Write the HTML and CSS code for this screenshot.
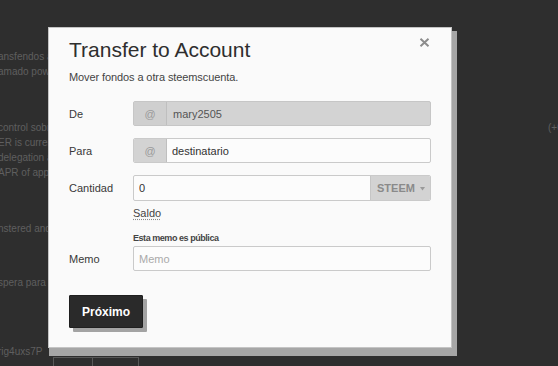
FILE: index.html
```html
<!DOCTYPE html>
<html lang="es">
<head>
<meta charset="utf-8">
<title>Transfer to Account</title>
<link rel="stylesheet" href="styles.css">
</head>
<body>
<div class="page">
  <div class="feed">
    <p class="bg-p p1"><span>ansfendos a otra cuenta</span><span>amado power down</span></p>
    <p class="bg-p p2"><span>control sobre sus fondos</span><span>ER is currently</span><span>delegation a otros</span><span>APR of approximately</span></p>
    <p class="bg-p p3"><span>nstered and</span></p>
    <p class="bg-p p4"><span>spera para</span></p>
    <div class="bg-row"><span class="bg-code">rig4uxs7P</span><i class="bg-box b1"></i><i class="bg-box b2"></i></div>
  </div>
  <div class="side">(+0.000 STEEM)</div>
</div>

<div class="modal">
  <button class="close" aria-label="Cerrar">
    <svg width="11" height="9" viewBox="0 0 11 9"><path d="M1.5 0.8L9.5 8.2M9.5 0.8L1.5 8.2" stroke="#8c8c8c" stroke-width="2" fill="none"/></svg>
  </button>
  <h2 class="title">Transfer to Account</h2>
  <p class="subtitle">Mover fondos a otra steemscuenta.</p>

  <div class="form">
    <div class="row r-de">
      <div class="label">De</div>
      <div class="field">
        <div class="group disabled"><span class="addon at">@</span><input class="ctl" value="mary2505" readonly></div>
      </div>
    </div>

    <div class="row r-para">
      <div class="label">Para</div>
      <div class="field">
        <div class="group"><span class="addon at">@</span><input class="ctl" value="destinatario" readonly></div>
      </div>
    </div>

    <div class="row r-cant">
      <div class="label tall">Cantidad</div>
      <div class="field">
        <div class="group tall"><input class="ctl" value="0" readonly><span class="addon asset">STEEM<svg class="caret" width="5" height="4" viewBox="0 0 5 4"><path d="M0 0H5L2.5 3.5Z" fill="#9a9a9a"/></svg></span></div>
        <span class="saldo">Saldo</span>
      </div>
    </div>

    <div class="row r-memo">
      <div class="label">Memo</div>
      <div class="field">
        <div class="note">Esta memo es pública</div>
        <div class="group"><input class="ctl" placeholder="Memo" readonly></div>
      </div>
    </div>
  </div>

  <button class="next">Próximo</button>
</div>
</body>
</html>
```

FILE: styles.css
```css
html, body {
  margin: 0;
  padding: 0;
}
body {
  width: 558px;
  height: 366px;
  overflow: hidden;
  background: #2e2e2e;
  font-family: "Liberation Sans", Arial, sans-serif;
  position: relative;
}

/* background page */
.page {
  display: flex;
  height: 366px;
}
.feed {
  flex: 1;
  min-width: 0;
  overflow: hidden;
  margin-left: -2px;
}
.bg-p {
  margin: 0;
  width: 50px;
  overflow: hidden;
  font-size: 10px;
  line-height: 15px;
  color: #5f5f5f;
  white-space: nowrap;
}
.bg-p span {
  display: block;
}
.p1 { margin-top: 49px; }
.p2 { margin-top: 41px; }
.p3 { margin-top: 41px; }
.p4 { margin-top: 39px; }
.bg-row {
  margin-top: 54px;
  display: flex;
  align-items: flex-start;
  font-size: 10px;
  line-height: 15px;
  color: #5f5f5f;
  white-space: nowrap;
}
.bg-code {
  width: 55px;
}
.bg-box {
  display: block;
  height: 20px;
  margin-top: 13px;
  border: 1px solid #585858;
}
.b1 { width: 38px; }
.b2 { width: 45px; border-left: none; }
.side {
  width: 10px;
  overflow: hidden;
  padding-top: 120px;
  font-size: 10px;
  line-height: 15px;
  color: #5f5f5f;
  white-space: nowrap;
}

/* modal */
.modal {
  position: absolute;
  left: 48px;
  top: 27px;
  width: 404px;
  height: 321px;
  box-sizing: border-box;
  background: #fafafa;
  border: 1px solid #c4c4c4;
  box-shadow: 3px 6px 0 2px #a6a6a6;
  padding: 10px 20px 0 20px;
}
.close {
  position: absolute;
  top: 10px;
  right: 21px;
  width: 11px;
  height: 9px;
  padding: 0;
  border: none;
  background: none;
  display: block;
}
.close svg { display: block; }

.title {
  margin: 0;
  font-size: 21px;
  line-height: 24px;
  font-weight: normal;
  color: #2e2e2e;
}
.subtitle {
  margin: 8px 0 0 0;
  font-size: 11px;
  line-height: 14px;
  color: #444;
  letter-spacing: -0.1px;
}

.form {
  margin-top: 17px;
  display: flex;
  flex-direction: column;
}
.row {
  display: flex;
  align-items: flex-start;
}
.r-para { margin-top: 12px; }
.r-cant { margin-top: 12px; }
.r-memo { margin-top: 12px; align-items: flex-end; }

.label {
  width: 64px;
  height: 25px;
  display: flex;
  align-items: center;
  font-size: 11px;
  color: #383838;
}
.label.tall { height: 26px; }

.field {
  flex: 1;
  display: flex;
  flex-direction: column;
  align-items: flex-start;
}

.group {
  align-self: stretch;
  display: flex;
  height: 25px;
  box-sizing: border-box;
  border: 1px solid #cacaca;
  border-radius: 2px;
  background: #fcfcfc;
  overflow: hidden;
}
.group.tall { height: 26px; }
.group.disabled {
  background: #d3d3d3;
  border-color: #c6c6c6;
}
.addon {
  display: flex;
  align-items: center;
  background: #d3d3d3;
  font-size: 11px;
}
.addon.at {
  width: 32px;
  justify-content: center;
  border-right: 1px solid #bfbfbf;
  color: #9a9a9a;
}
.disabled .addon.at {
  background: #cfcfcf;
}
.addon.asset {
  width: 60px;
  box-sizing: border-box;
  padding-left: 6px;
  border-left: 1px solid #c6c6c6;
  color: #8a8a8a;
  font-weight: bold;
  gap: 5px;
}
.caret { display: block; margin-top: 1px; }

.ctl {
  flex: 1;
  min-width: 0;
  border: none;
  outline: none;
  background: transparent;
  padding: 0 5px;
  margin: 0;
  font-family: "Liberation Sans", Arial, sans-serif;
  font-size: 11px;
  color: #333;
  height: 100%;
}
.disabled .ctl {
  color: #555;
  padding-left: 6px;
}
.ctl::placeholder {
  color: #aaa;
}

.saldo {
  margin-top: 5px;
  font-size: 11px;
  line-height: 14px;
  color: #444;
  text-decoration: underline dotted #888;
  text-underline-offset: 2px;
}
.note {
  font-size: 9px;
  line-height: 12px;
  font-weight: bold;
  letter-spacing: -0.45px;
  color: #444;
  margin-bottom: 2px;
}

.next {
  display: block;
  margin-top: 24px;
  width: 74px;
  height: 33px;
  padding: 0;
  border: 1px solid #1f1f1f;
  border-radius: 1px;
  background: #2a2a2a;
  color: #fff;
  font-family: "Liberation Sans", Arial, sans-serif;
  font-size: 12px;
  font-weight: bold;
  box-shadow: 4px 4px 0 #a3a3a3;
}
```
